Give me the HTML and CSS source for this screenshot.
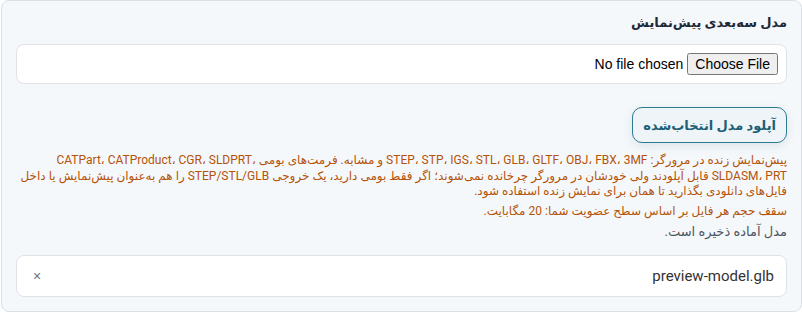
FILE: index.html
```html
<!DOCTYPE html>
<html lang="fa" dir="rtl">
  <head>
    <meta charset="UTF-8" />
    <meta name="viewport" content="width=device-width, initial-scale=1.0" />
    <title>مدل سه‌بعدی پیش‌نمایش</title>
    <link rel="stylesheet" href="styles.css">
  </head>
  <body>
    <section class="model-card">
      <label for="model-file" class="field-title">مدل سه‌بعدی پیش‌نمایش</label>

      <div class="file-box">
        <input type="file" id="model-file" class="file-input" />
      </div>

      <div class="upload-row">
        <button type="button" class="upload-button">آپلود مدل انتخاب‌شده</button>
      </div>

      <p class="hint">
        پیش‌نمایش زنده در مرورگر: STEP، STP، IGS، STL، GLB، GLTF، OBJ، FBX، 3MF و مشابه. فرمت‌های بومی CATPart، CATProduct، CGR، SLDPRT، SLDASM، PRT قابل آپلودند ولی خودشان در مرورگر چرخانده نمی‌شوند؛ اگر فقط بومی دارید، یک خروجی STEP/STL/GLB را هم به‌عنوان پیش‌نمایش یا داخل فایل‌های دانلودی بگذارید تا همان برای نمایش زنده استفاده شود.
      </p>
      <p class="hint hint-limit">سقف حجم هر فایل بر اساس سطح عضویت شما: 20 مگابایت.</p>
      <p class="status">مدل آماده ذخیره است.</p>

      <div class="file-box current-file">
        <span class="file-name">preview-model.glb</span>
        <button type="button" class="clear-button" aria-label="حذف فایل">×</button>
      </div>
    </section>
  </body>
</html>
```

FILE: styles.css
```css
body {
  margin: 0;
  font-family: Roboto, "DejaVu Sans", sans-serif;
  color: #1f2937;
}

.model-card {
  box-sizing: border-box;
  width: 801px;
  height: 312px;
  padding: 12px 14px 14px;
  background-color: #f5f8fb;
  border: 1px solid #dcdfe3;
  border-radius: 8px;
}

.field-title {
  display: block;
  font-size: 13px;
  font-weight: 600;
  line-height: 20px;
  color: #1f2937;
  margin-bottom: 11px;
}

.file-box {
  box-sizing: border-box;
  display: flex;
  align-items: center;
  height: 40px;
  padding: 0 8px;
  background-color: #fff;
  border: 1px solid #dfe3e8;
  border-radius: 8px;
}

.file-input {
  font-family: "Liberation Sans", Arial, sans-serif;
  font-size: 14px;
  color: #000;
}

.upload-row {
  margin-top: 23px;
  display: flex;
}

.upload-button {
  height: 36px;
  padding: 0 10px;
  font-family: inherit;
  font-size: 13px;
  font-weight: bold;
  color: #1d5f73;
  background-color: #eef4f7;
  border: 1px solid #2b7a8f;
  border-radius: 10px;
  box-shadow: 0 3px 10px rgba(30, 80, 100, 0.12);
  cursor: pointer;
}

.hint {
  margin: 10px 0 0;
  font-size: 12px;
  line-height: 15.5px;
  color: #b45309;
}

.hint-limit {
  margin-top: 4px;
}

.status {
  margin: 4px 0 0;
  font-size: 13px;
  line-height: 18px;
  color: #4b5563;
}

.current-file {
  margin-top: 14px;
  height: 42px;
  justify-content: space-between;
  padding: 0 12px 0 16px;
}

.file-name {
  font-size: 15px;
  color: #333;
}

.clear-button {
  background: none;
  border: none;
  padding: 0;
  font-size: 14px;
  color: #6b7280;
  cursor: pointer;
}
```
